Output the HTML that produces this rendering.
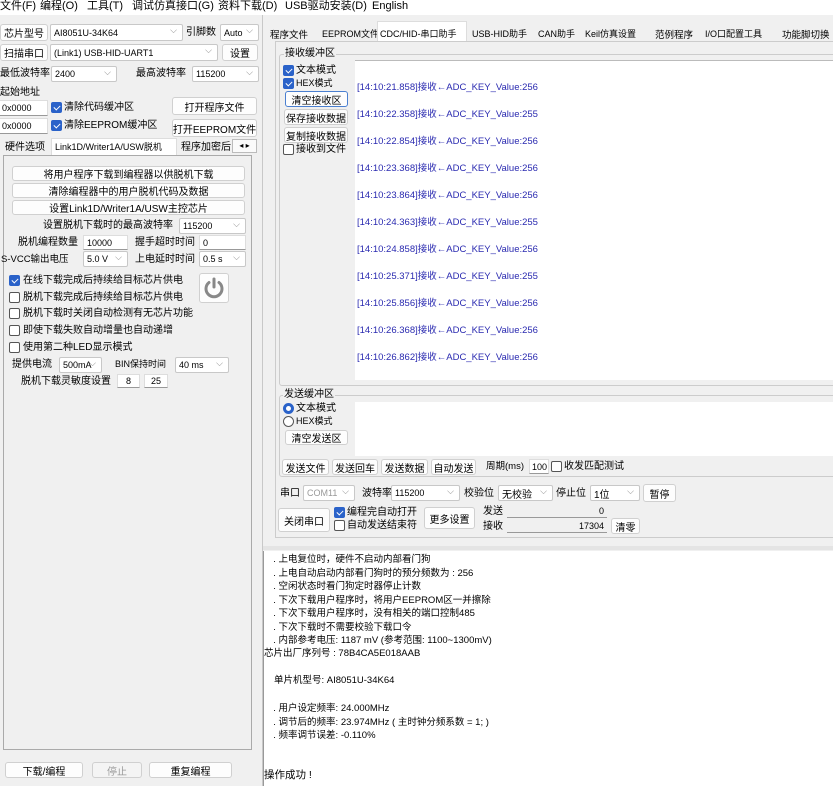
<!DOCTYPE html>
<html><head><meta charset="utf-8"><style>
*{box-sizing:border-box;margin:0;padding:0}
body{width:833px;height:786px;background:#f0f0f0;position:relative;overflow:hidden;font-family:"Liberation Sans","Noto Sans CJK SC",sans-serif;font-size:10px;color:#000}
.a{position:absolute;white-space:nowrap;line-height:1}
.btn{position:absolute;background:#fdfdfd;border:1px solid #d0d0d0;border-radius:3px;text-align:center;font-size:10px;display:flex;align-items:center;justify-content:center;white-space:nowrap;overflow:hidden}
.cb{position:absolute;background:#fff;border:1px solid #c8c8c8;border-radius:2px;font-size:9px;padding-left:3px;display:flex;align-items:center;white-space:nowrap;overflow:hidden}
.cb:after{content:"⌵";position:absolute;right:5px;top:0;color:#888;font-size:9px}
.inp{position:absolute;background:#fff;border:1px solid #ddd;border-bottom:1px solid #999;font-size:9px;padding-left:3px;display:flex;align-items:center;white-space:nowrap}
.ck{position:absolute;width:11px;height:11px;border:1px solid #555;border-radius:2px;background:#fff}
.ck.on{background:#2a62c9;border-color:#2a62c9}
.ck.on:after{content:"";position:absolute;left:3px;top:1px;width:3px;height:5px;border:solid #fff;border-width:0 1.5px 1.5px 0;transform:rotate(45deg)}
.rd{position:absolute;width:11px;height:11px;border:1px solid #555;border-radius:50%;background:#fff}
.rd.on{border:3px solid #2a62c9}
.blue{color:#2a2ab0;font-size:9.5px}
.tab{position:absolute;top:24px;height:17px;font-size:9.5px;padding:3px 2px 0;white-space:nowrap}
.m{position:absolute;top:1px;font-size:11px;white-space:nowrap;line-height:1}
</style></head><body>
<div class="a" style="left:0;top:0;width:833px;height:15px;background:#fff"></div>
<div class="m" style="left:0">文件(F)</div>
<div class="m" style="left:40px">编程(O)</div>
<div class="m" style="left:87px">工具(T)</div>
<div class="m" style="left:132px">调试仿真接口(G)</div>
<div class="m" style="left:218px">资料下载(D)</div>
<div class="m" style="left:285px">USB驱动安装(D)</div>
<div class="m" style="left:372px">English</div>

<div class="btn" style="left:0;top:24px;width:48px;height:17px">芯片型号</div>
<div class="cb" style="left:50px;top:24px;width:133px;height:17px">AI8051U-34K64</div>
<div class="a" style="left:186px;top:28px">引脚数</div>
<div class="cb" style="left:220px;top:24px;width:39px;height:17px">Auto</div>
<div class="btn" style="left:0;top:44px;width:48px;height:17px">扫描串口</div>
<div class="cb" style="left:50px;top:44px;width:168px;height:17px">(Link1) USB-HID-UART1</div>
<div class="btn" style="left:222px;top:44px;width:36px;height:17px">设置</div>
<div class="a" style="left:0;top:69px">最低波特率</div>
<div class="cb" style="left:51px;top:66px;width:66px;height:16px">2400</div>
<div class="a" style="left:136px;top:69px">最高波特率</div>
<div class="cb" style="left:192px;top:66px;width:67px;height:16px">115200</div>
<div class="a" style="left:0;top:88px">起始地址</div>
<div class="inp" style="left:-2px;top:100px;width:50px;height:16px">0x0000</div>
<div class="ck on" style="left:51px;top:102px"></div><div class="a" style="left:64px;top:103px">清除代码缓冲区</div>
<div class="btn" style="left:172px;top:97px;width:85px;height:18px">打开程序文件</div>
<div class="inp" style="left:-2px;top:118px;width:50px;height:16px">0x0000</div>
<div class="ck on" style="left:51px;top:120px"></div><div class="a" style="left:64px;top:121px">清除EEPROM缓冲区</div>
<div class="btn" style="left:172px;top:119px;width:85px;height:18px">打开EEPROM文件</div>
<div class="a" style="left:5px;top:143px">硬件选项</div>
<div class="a" style="left:51px;top:138px;width:126px;height:18px;background:#fff;border:1px solid #ddd;border-bottom:none"></div>
<div class="a" style="left:55px;top:143px;font-size:9px">Link1D/Writer1A/USW脱机</div>
<div class="a" style="left:181px;top:143px">程序加密后</div>
<div class="a" style="left:232px;top:139px;width:25px;height:14px;border:1px solid #bbb;background:#fafafa;font-size:8px;text-align:center;line-height:12px">◂ ▸</div>
<div class="a" style="left:3px;top:155px;width:249px;height:595px;border:1px solid #aaa;background:#f0f0f0"></div>
<div class="btn" style="left:12px;top:166px;width:233px;height:15px">将用户程序下载到编程器以供脱机下载</div>
<div class="btn" style="left:12px;top:183px;width:233px;height:15px">清除编程器中的用户脱机代码及数据</div>
<div class="btn" style="left:12px;top:200px;width:233px;height:15px">设置Link1D/Writer1A/USW主控芯片</div>
<div class="a" style="left:43px;top:221px">设置脱机下载时的最高波特率</div>
<div class="cb" style="left:179px;top:218px;width:67px;height:16px">115200</div>
<div class="a" style="left:18px;top:238px">脱机编程数量</div>
<div class="inp" style="left:83px;top:235px;width:45px;height:15px">10000</div>
<div class="a" style="left:135px;top:238px">握手超时时间</div>
<div class="inp" style="left:199px;top:235px;width:47px;height:15px">0</div>
<div class="a" style="left:1px;top:255px;font-size:9.5px">S-VCC输出电压</div>
<div class="cb" style="left:83px;top:251px;width:45px;height:16px">5.0 V</div>
<div class="a" style="left:135px;top:255px">上电延时时间</div>
<div class="cb" style="left:199px;top:251px;width:47px;height:16px">0.5 s</div>
<div class="ck on" style="left:9px;top:275px"></div><div class="a" style="left:23px;top:276px">在线下载完成后持续给目标芯片供电</div>
<div class="ck" style="left:9px;top:292px"></div><div class="a" style="left:23px;top:293px">脱机下载完成后持续给目标芯片供电</div>
<div class="ck" style="left:9px;top:308px"></div><div class="a" style="left:23px;top:309px">脱机下载时关闭自动检测有无芯片功能</div>
<div class="ck" style="left:9px;top:325px"></div><div class="a" style="left:23px;top:326px">即使下载失败自动增量也自动递增</div>
<div class="ck" style="left:9px;top:342px"></div><div class="a" style="left:23px;top:343px">使用第二种LED显示模式</div>
<div class="btn" style="left:199px;top:273px;width:30px;height:30px">
<svg width="24" height="24" viewBox="0 0 24 24"><path d="M7 6.5A8 8 0 1 0 17 6.5" fill="none" stroke="#888" stroke-width="3" stroke-linecap="round"/><line x1="12" y1="3" x2="12" y2="11" stroke="#888" stroke-width="3" stroke-linecap="round"/></svg></div>
<div class="a" style="left:12px;top:360px">提供电流</div>
<div class="cb" style="left:59px;top:357px;width:43px;height:16px">500mA</div>
<div class="a" style="left:115px;top:360px;font-size:9px">BIN保持时间</div>
<div class="cb" style="left:175px;top:357px;width:54px;height:16px">40 ms</div>
<div class="a" style="left:21px;top:377px">脱机下载灵敏度设置</div>
<div class="inp" style="left:117px;top:374px;width:23px;height:14px;justify-content:center;padding:0">8</div>
<div class="inp" style="left:144px;top:374px;width:24px;height:14px;justify-content:center;padding:0">25</div>
<div class="btn" style="left:5px;top:762px;width:78px;height:16px">下载/编程</div>
<div class="btn" style="left:92px;top:762px;width:50px;height:16px;color:#999;background:#f4f4f4">停止</div>
<div class="btn" style="left:149px;top:762px;width:83px;height:16px">重复编程</div>
<div class="a" style="left:262px;top:15px;width:1px;height:771px;background:#c8c8c8"></div>

<div class="tab" style="left:268px">程序文件</div>
<div class="tab" style="left:320px;font-size:9px">EEPROM文件</div>
<div class="tab" style="left:377px;width:90px;background:#fff;border:1px solid #ddd;border-bottom:none;top:21px;height:21px;padding-top:5px;font-size:9px">CDC/HID-串口助手</div>
<div class="tab" style="left:470px;font-size:9px">USB-HID助手</div>
<div class="tab" style="left:536px;font-size:9px">CAN助手</div>
<div class="tab" style="left:583px;font-size:9px">Keil仿真设置</div>
<div class="tab" style="left:653px">范例程序</div>
<div class="tab" style="left:703px;font-size:9px">I/O口配置工具</div>
<div class="tab" style="left:780px">功能脚切换</div>
<div class="a" style="left:275px;top:41px;width:570px;height:497px;border:1px solid #ccc;background:#f0f0f0"></div>
<div class="a" style="left:279px;top:54px;width:560px;height:332px;border:1px solid #ccc;border-radius:3px"></div>
<div class="a" style="left:284px;top:49px;background:#f0f0f0;padding:0 1px">接收缓冲区</div>
<div class="a" style="left:355px;top:60px;width:478px;height:320px;background:#fff;border-top:1px solid #bbb"></div>
<div class="ck on" style="left:283px;top:65px"></div><div class="a" style="left:296px;top:66px">文本模式</div>
<div class="ck on" style="left:283px;top:78px"></div><div class="a" style="left:296px;top:79px;font-size:9px">HEX模式</div>
<div class="btn" style="left:285px;top:91px;width:63px;height:16px;border-color:#4a7fd0">清空接收区</div>
<div class="btn" style="left:284px;top:109px;width:64px;height:16px">保存接收数据</div>
<div class="btn" style="left:284px;top:127px;width:64px;height:16px">复制接收数据</div>
<div class="ck" style="left:283px;top:144px"></div><div class="a" style="left:296px;top:145px">接收到文件</div>
<div class="a blue" style="left:357px;top:83px">[14:10:21.858]接收←ADC_KEY_Value:256</div>
<div class="a blue" style="left:357px;top:110px">[14:10:22.358]接收←ADC_KEY_Value:255</div>
<div class="a blue" style="left:357px;top:137px">[14:10:22.854]接收←ADC_KEY_Value:256</div>
<div class="a blue" style="left:357px;top:164px">[14:10:23.368]接收←ADC_KEY_Value:256</div>
<div class="a blue" style="left:357px;top:191px">[14:10:23.864]接收←ADC_KEY_Value:256</div>
<div class="a blue" style="left:357px;top:218px">[14:10:24.363]接收←ADC_KEY_Value:255</div>
<div class="a blue" style="left:357px;top:245px">[14:10:24.858]接收←ADC_KEY_Value:256</div>
<div class="a blue" style="left:357px;top:272px">[14:10:25.371]接收←ADC_KEY_Value:255</div>
<div class="a blue" style="left:357px;top:299px">[14:10:25.856]接收←ADC_KEY_Value:256</div>
<div class="a blue" style="left:357px;top:326px">[14:10:26.368]接收←ADC_KEY_Value:256</div>
<div class="a blue" style="left:357px;top:353px">[14:10:26.862]接收←ADC_KEY_Value:256</div>

<div class="a" style="left:279px;top:395px;width:560px;height:82px;border:1px solid #ccc;border-radius:3px"></div>
<div class="a" style="left:283px;top:390px;background:#f0f0f0;padding:0 1px">发送缓冲区</div>
<div class="a" style="left:355px;top:402px;width:478px;height:54px;background:#fff"></div>
<div class="rd on" style="left:283px;top:403px"></div><div class="a" style="left:296px;top:404px">文本模式</div>
<div class="rd" style="left:283px;top:416px"></div><div class="a" style="left:296px;top:417px;font-size:9px">HEX模式</div>
<div class="btn" style="left:285px;top:430px;width:63px;height:15px">清空发送区</div>
<div class="btn" style="left:282px;top:459px;width:47px;height:16px">发送文件</div>
<div class="btn" style="left:332px;top:459px;width:46px;height:16px">发送回车</div>
<div class="btn" style="left:381px;top:459px;width:47px;height:16px">发送数据</div>
<div class="btn" style="left:431px;top:459px;width:45px;height:16px">自动发送</div>
<div class="a" style="left:486px;top:462px;font-size:9.5px">周期(ms)</div>
<div class="inp" style="left:529px;top:459px;width:20px;height:15px;font-size:9px;padding-left:2px">100</div>
<div class="ck" style="left:551px;top:461px"></div><div class="a" style="left:564px;top:462px">收发匹配测试</div>

<div class="a" style="left:280px;top:489px">串口</div>
<div class="cb" style="left:303px;top:485px;width:52px;height:16px;color:#999">COM11</div>
<div class="a" style="left:362px;top:489px">波特率</div>
<div class="cb" style="left:391px;top:485px;width:69px;height:16px">115200</div>
<div class="a" style="left:464px;top:489px">校验位</div>
<div class="cb" style="left:498px;top:485px;width:55px;height:16px;font-size:10px">无校验</div>
<div class="a" style="left:556px;top:489px">停止位</div>
<div class="cb" style="left:590px;top:485px;width:50px;height:16px;font-size:10px">1位</div>
<div class="btn" style="left:643px;top:484px;width:33px;height:18px">暂停</div>
<div class="btn" style="left:278px;top:508px;width:52px;height:24px">关闭串口</div>
<div class="ck on" style="left:334px;top:507px"></div><div class="a" style="left:347px;top:508px">编程完自动打开</div>
<div class="ck" style="left:334px;top:520px"></div><div class="a" style="left:347px;top:521px">自动发送结束符</div>
<div class="btn" style="left:424px;top:507px;width:51px;height:22px">更多设置</div>
<div class="a" style="left:483px;top:507px">发送</div>
<div class="a" style="left:483px;top:522px">接收</div>
<div class="a" style="left:507px;top:505px;width:100px;height:13px;border-bottom:1px solid #999;text-align:right;font-size:9px;padding-right:3px;padding-top:2px">0</div>
<div class="a" style="left:507px;top:519px;width:100px;height:14px;border-bottom:1px solid #999;text-align:right;font-size:9px;padding-right:3px;padding-top:3px">17304</div>
<div class="btn" style="left:611px;top:518px;width:29px;height:16px">清零</div>

<div class="a" style="left:263px;top:546px;width:570px;height:4px;background:#e4e4e4"></div>
<div class="a" style="left:263px;top:551px;width:570px;height:235px;background:#fff;border-left:1px solid #999"></div>
<div class="a" style="left:268px;top:553px;font-size:9.5px;line-height:13.5px;white-space:pre">  . 上电复位时，硬件不启动内部看门狗
  . 上电自动启动内部看门狗时的预分频数为 : 256
  . 空闲状态时看门狗定时器停止计数
  . 下次下载用户程序时，将用户EEPROM区一并擦除
  . 下次下载用户程序时，没有相关的端口控制485
  . 下次下载时不需要校验下载口令
  . 内部参考电压: 1187 mV (参考范围: 1100~1300mV)
</div>
<div class="a" style="left:264px;top:649px;font-size:9.5px">芯片出厂序列号 : 78B4CA5E018AAB</div>
<div class="a" style="left:274px;top:676px;font-size:9.5px">单片机型号: AI8051U-34K64</div>
<div class="a" style="left:268px;top:702px;font-size:9.5px;line-height:13.5px;white-space:pre">  . 用户设定频率: 24.000MHz
  . 调节后的频率: 23.974MHz ( 主时钟分频系数 = 1; )
  . 频率调节误差: -0.110%</div>
<div class="a" style="left:264px;top:770px;font-size:10.5px">操作成功 !</div>
</body></html>
